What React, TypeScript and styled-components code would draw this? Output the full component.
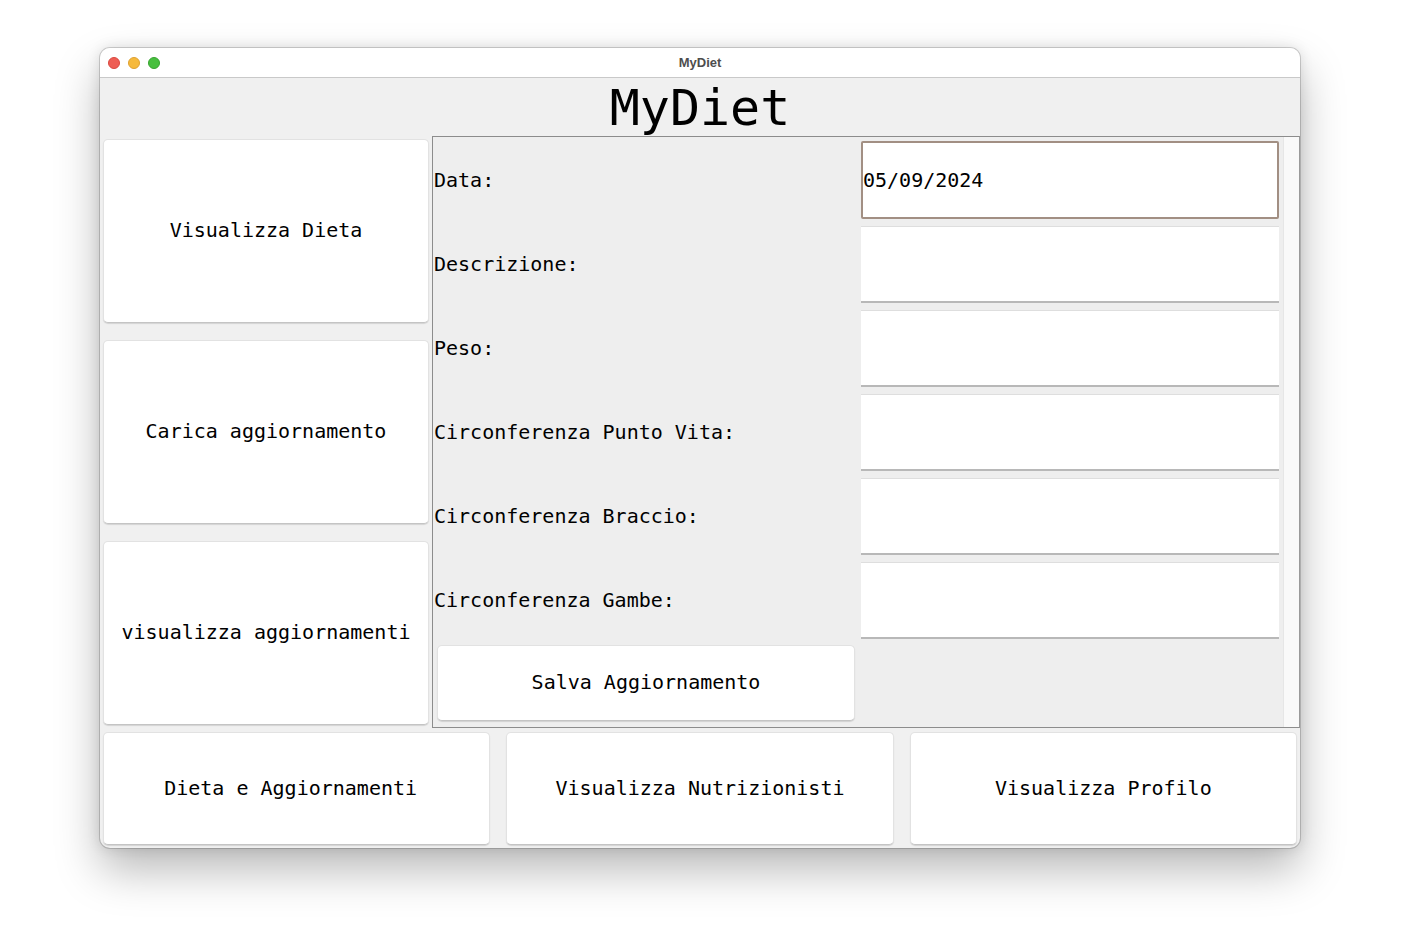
import React from "react";
import styled, { createGlobalStyle } from "styled-components";

const Global = createGlobalStyle`
  html, body { margin: 0; padding: 0; background: #ffffff; }
  body { width: 1407px; height: 928px; overflow: hidden; }
`;

const Page = styled.div`
  padding: 48px 0 0 100px;
`;

const Window = styled.div`
  width: 1200px;
  height: 800px;
  border-radius: 10px;
  overflow: hidden;
  box-shadow: 0 0 0 1px rgba(0, 0, 0, 0.16), 0 22px 45px rgba(0, 0, 0, 0.28),
    0 0 14px rgba(0, 0, 0, 0.12);
  display: flex;
  flex-direction: column;
  background: #f0f0f0;
`;

const TitleBar = styled.div`
  height: 29px;
  flex: none;
  background: #ffffff;
  border-bottom: 1px solid #c9c9c9;
  display: flex;
  align-items: center;
  position: relative;
  justify-content: center;
`;

const Lights = styled.div`
  position: absolute;
  left: 8px;
  top: 9px;
  display: flex;
  gap: 8px;
`;

const Light = styled.span<{ $c: string; $b: string }>`
  width: 12px;
  height: 12px;
  border-radius: 50%;
  background: ${(p) => p.$c};
  box-sizing: border-box;
  border: 0.5px solid ${(p) => p.$b};
`;

const WinTitle = styled.div`
  font-family: "Liberation Sans", Arial, sans-serif;
  font-weight: bold;
  font-size: 13px;
  color: #4d4d4d;
`;

const Header = styled.div`
  height: 58px;
  flex: none;
  display: flex;
  align-items: center;
  justify-content: center;
  font-family: "DejaVu Sans Mono", monospace;
  font-size: 50px;
  color: #000;
  padding-top: 1px;
  box-sizing: border-box;
`;

const Middle = styled.div`
  display: flex;
  height: 592px;
  flex: none;
`;

const LeftCol = styled.div`
  width: 332px;
  box-sizing: border-box;
  padding: 3px;
  display: flex;
  flex-direction: column;
  gap: 17px;
`;

const Btn = styled.button`
  flex: 1;
  min-width: 0;
  margin: 0;
  background: #ffffff;
  border: 1px solid #e2e2e2;
  border-bottom-color: #c4c4c4;
  border-radius: 5px;
  box-shadow: 0 1px 1px rgba(0, 0, 0, 0.12);
  font-family: "DejaVu Sans Mono", monospace;
  font-size: 20px;
  color: #000;
  padding: 0 0 2px 0;
  white-space: pre;
  cursor: default;
`;

const Panel = styled.div`
  flex: 1;
  box-sizing: border-box;
  border: 1px solid #8c8c8c;
  border-right-color: #9a9a9a;
  background: #eeeeee;
  display: flex;
  height: 592px;
`;

const Form = styled.div`
  flex: 1;
  display: grid;
  grid-template-columns: 425px 424px;
  grid-template-rows: repeat(7, 84px);
  padding: 1px 0 0 0;
`;

const Label = styled.div`
  display: flex;
  align-items: center;
  font-family: "DejaVu Sans Mono", monospace;
  font-size: 20px;
  color: #000;
  padding-left: 1px;
`;

const FieldCell = styled.div`
  padding: 3px;
  display: flex;
`;

const Field = styled.div<{ $focus?: boolean }>`
  flex: 1;
  background: #ffffff;
  box-sizing: border-box;
  display: flex;
  align-items: center;
  font-family: "DejaVu Sans Mono", monospace;
  font-size: 20px;
  color: #000;
  ${(p) =>
    p.$focus
      ? `border: 2px solid #a28f83; border-radius: 2px;`
      : `border-top: 1px solid #dedede; border-bottom: 2px solid #b8b8b8; margin-top: 1px;`}
`;

const BtnCell = styled.div`
  padding: 3px 3px 5px 4px;
  display: flex;
`;

const Scroll = styled.div`
  width: 15px;
  flex: none;
  background: #f9f9f9;
  border-left: 1px solid #e6e6e6;
`;

const Bottom = styled.div`
  flex: 1;
  display: flex;
  gap: 16px;
  padding: 4px 3px 3px 3px;
`;

const labels = [
  "Data:",
  "Descrizione:",
  "Peso:",
  "Circonferenza Punto Vita:",
  "Circonferenza Braccio:",
  "Circonferenza Gambe:",
];

export default function App() {
  return (
    <>
      <Global />
      <Page>
        <Window>
          <TitleBar>
            <Lights>
              <Light $c="#ee5d54" $b="#d9483f" />
              <Light $c="#f6b93b" $b="#dea030" />
              <Light $c="#47bf3e" $b="#37a32f" />
            </Lights>
            <WinTitle>MyDiet</WinTitle>
          </TitleBar>
          <Header>MyDiet</Header>
          <Middle>
            <LeftCol>
              <Btn>Visualizza Dieta</Btn>
              <Btn>Carica aggiornamento</Btn>
              <Btn>visualizza aggiornamenti</Btn>
            </LeftCol>
            <Panel>
              <Form>
                {labels.map((l, i) => (
                  <React.Fragment key={l}>
                    <Label>{l}</Label>
                    <FieldCell>
                      <Field $focus={i === 0}>{i === 0 ? "05/09/2024" : ""}</Field>
                    </FieldCell>
                  </React.Fragment>
                ))}
                <BtnCell>
                  <Btn>Salva Aggiornamento</Btn>
                </BtnCell>
                <div />
              </Form>
              <Scroll />
            </Panel>
          </Middle>
          <Bottom>
            <Btn>{"Dieta e Aggiornamenti "}</Btn>
            <Btn>Visualizza Nutrizionisti</Btn>
            <Btn>Visualizza Profilo</Btn>
          </Bottom>
        </Window>
      </Page>
    </>
  );
}
